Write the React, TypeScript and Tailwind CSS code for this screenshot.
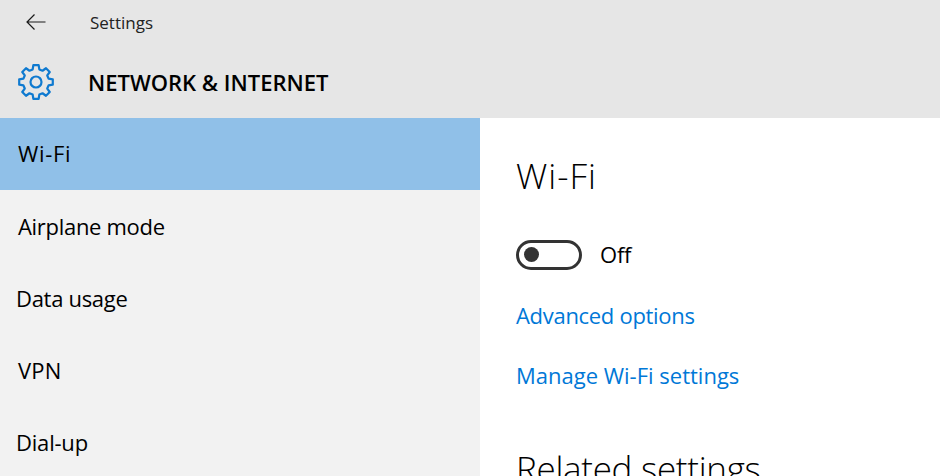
const NAV_ITEMS = [
  { label: "Wi-Fi", className: "pl-[18px] pb-[2px] tracking-[0.7px] bg-[#90c0e8]" },
  { label: "Airplane mode", className: "pl-[18px] tracking-[-0.3px]" },
  { label: "Data usage", className: "pl-[16px] tracking-[-0.3px]" },
  { label: "VPN", className: "pl-[18px] tracking-[0.2px]" },
  { label: "Dial-up", className: "pl-[16px] tracking-[-0.2px]" },
];

function gearPath() {
  const cx = 18;
  const cy = 18;
  const teeth = 8;
  const pts: string[] = [];
  for (let i = 0; i < teeth; i++) {
    const a = (i * Math.PI * 2) / teeth - Math.PI / 2;
    const step = (Math.PI * 2) / teeth;
    const p = (r: number, t: number) =>
      `${(cx + r * Math.cos(t)).toFixed(2)} ${(cy + r * Math.sin(t)).toFixed(2)}`;
    pts.push(`${i === 0 ? "M" : "L"}${p(17, a - step * 0.2)}`);
    pts.push(`L${p(17, a + step * 0.2)}`);
    pts.push(`L${p(13, a + step * 0.33)}`);
    pts.push(`L${p(13, a + step * 0.67)}`);
  }
  return pts.join(" ") + " Z";
}

function GearIcon() {
  return (
    <svg width="36" height="36" viewBox="0 0 36 36" fill="none" stroke="#0f7ad0" strokeWidth="2.2" strokeLinejoin="round">
      <path d={gearPath()} />
      <circle cx="18" cy="18" r="5.5" />
    </svg>
  );
}

function BackIcon() {
  return (
    <svg width="20" height="16" viewBox="0 0 20 16" fill="none" stroke="#1a1a1a" strokeWidth="1.2">
      <path d="M1 8H19.5M8.5 0.5L1 8L8.5 15.5" />
    </svg>
  );
}

export default function App() {
  return (
    <div className="w-[940px] h-[476px] overflow-hidden bg-white text-black font-['Open_Sans','Noto_Sans',sans-serif]">
      {/* Title bar + section header */}
      <div className="h-[118px] bg-[#e6e6e6]">
        <div className="h-[44px] flex items-center pl-[26px]">
          <BackIcon />
          <span className="ml-[44px] pt-[2px] text-[17px] text-[#222]">Settings</span>
        </div>
        <div className="mt-[16px] h-[44px] flex items-center pl-[18px]">
          <GearIcon />
          <h1 className="ml-[34px] text-[22px] font-semibold">NETWORK &amp; INTERNET</h1>
        </div>
      </div>

      <div className="flex">
        {/* Sidebar */}
        <div className="w-[480px] h-[358px] bg-[#f2f2f2] shrink-0">
          {NAV_ITEMS.map((item) => (
            <div key={item.label} className={`h-[72px] flex items-center text-[22px] ${item.className}`}>
              {item.label}
            </div>
          ))}
        </div>

        {/* Content */}
        <div className="pl-[36px] pt-[33px]">
          <h2 className="text-[35px] leading-[50px] font-light tracking-[1px]">Wi-Fi</h2>
          <div className="flex items-center mt-[37px]">
            <div className="w-[66px] h-[30px] rounded-full border-[3px] border-[#333] flex items-center pl-[5px]">
              <div className="w-[15px] h-[15px] rounded-full bg-[#333]" />
            </div>
            <span className="ml-[18px] text-[22px] tracking-[-0.2px]">Off</span>
          </div>
          <p className="mt-[29px] text-[22px] leading-[30px] tracking-[-0.3px] text-[#0078d7]">Advanced options</p>
          <p className="mt-[30px] text-[22px] leading-[30px] text-[#0078d7]">Manage Wi-Fi settings</p>
          <h2 className="mt-[54px] text-[35px] leading-[50px] font-light tracking-[-0.3px]">Related settings</h2>
        </div>
      </div>
    </div>
  );
}
